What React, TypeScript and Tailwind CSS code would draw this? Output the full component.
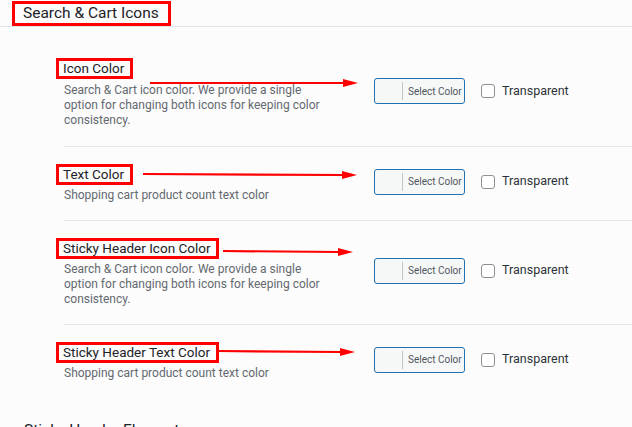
import React from "react";

type Row = { label: string; desc: string };

const rows: Row[] = [
  {
    label: "Icon Color",
    desc: "Search & Cart icon color. We provide a single option for changing both icons for keeping color consistency.",
  },
  { label: "Text Color", desc: "Shopping cart product count text color" },
  {
    label: "Sticky Header Icon Color",
    desc: "Search & Cart icon color. We provide a single option for changing both icons for keeping color consistency.",
  },
  { label: "Sticky Header Text Color", desc: "Shopping cart product count text color" },
];

const arrows = [
  { x1: 150, y1: 83, x2: 358, y2: 83 },
  { x1: 143, y1: 174, x2: 357, y2: 175 },
  { x1: 223, y1: 251, x2: 353, y2: 252 },
  { x1: 218, y1: 351, x2: 355, y2: 352 },
];

function Arrow({ x1, y1, x2, y2 }: { x1: number; y1: number; x2: number; y2: number }) {
  const hx = x2 - 15;
  return (
    <g>
      <line x1={x1} y1={y1} x2={hx + 1} y2={y2} stroke="#ff0000" strokeWidth={2.2} />
      <polygon points={`${hx},${y2 - 4} ${x2},${y2} ${hx},${y2 + 4}`} fill="#ff0000" />
    </g>
  );
}

export default function App() {
  return (
    <div className="relative w-[632px] h-[427px] overflow-hidden bg-[#fcfcfc] font-['Roboto',sans-serif]">
      <div className="pl-[12px] pt-[1px] border-b border-[#e2e4e7]">
        <div className="flex w-fit items-center h-[25px] border-[3px] border-[#ff0000] pl-[8px] pr-[9px] text-[15.5px] leading-none text-[#1d2327]">
          Search &amp; Cart Icons
        </div>
      </div>

      <div className="pl-[64px]">
        {rows.map((r, i) => (
          <div
            key={r.label}
            className={`flex items-center ${
              i === 0 ? "pt-[31px] pb-[18px]" : "pt-[17px] pb-[17px] border-t border-[#e6e7e9]"
            }`}
          >
            <div className="w-[310px] shrink-0">
              <div className="flex w-fit items-center h-[21px] -ml-[8px] border-[3px] border-[#ff0000] pl-[4px] pr-[6px] text-[13.5px] leading-none text-[#1d2327]">
                {r.label}
              </div>
              <p className={`${i === 0 ? "mt-[4px]" : "mt-[3px]"} w-[262px] text-[12px] leading-[15px] text-[#646970]`}>
                {r.desc}
              </p>
            </div>
            <div className="flex items-center pb-[4px]">
              <div className="flex items-center w-[91px] h-[26px] rounded-[3px] border border-[#2271b1] bg-[#f6f7f7]">
                <div className="w-[27px] h-full" />
                <div className="w-px h-[18px] bg-[#c3c4c7]" />
                <span className="pl-[5px] text-[10px] text-[#50575e] whitespace-nowrap">Select Color</span>
              </div>
              <div className="ml-[16px] w-[14px] h-[14px] rounded-[3px] border border-[#8c8f94] bg-white" />
              <span className="ml-[7px] text-[12.5px] text-[#2c3338]">Transparent</span>
            </div>
          </div>
        ))}
      </div>

      <div className="pl-[24px] pt-[25px] text-[15.5px] leading-none text-[#1d2327]">Sticky Header Elements</div>

      <svg className="absolute inset-0 pointer-events-none" width={632} height={427}>
        {arrows.map((a, i) => (
          <Arrow key={i} {...a} />
        ))}
      </svg>
    </div>
  );
}
